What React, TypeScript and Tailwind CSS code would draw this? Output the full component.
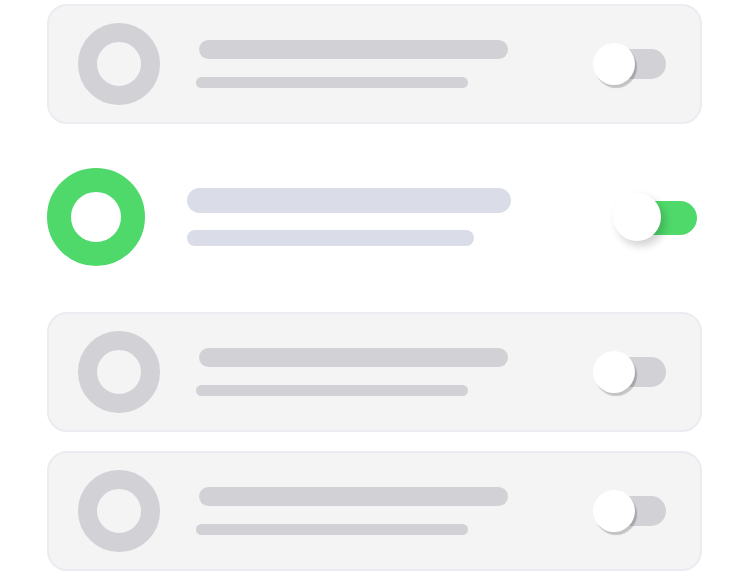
import React from "react";

function InactiveCard() {
  return (
    <div className="ml-[47px] flex h-[120px] w-[655px] items-center rounded-[20px] border-2 border-[#ebebf1] bg-[#f4f4f5] pl-[29px] pr-[34px]">
      <div className="h-[82px] w-[82px] shrink-0 rounded-full border-[19px] border-[#d1d1d6]" />
      <div className="ml-[36px] -mt-[1px] flex flex-col gap-[18px]">
        <div className="ml-[3px] h-[19px] w-[309px] rounded-full bg-[#d1d1d6]" />
        <div className="h-[11px] w-[272px] rounded-full bg-[#d1d1d6]" />
      </div>
      <div className="relative ml-auto h-[42px] w-[73px]">
        <div className="absolute right-0 top-[6px] h-[30px] w-[60px] rounded-full bg-[#d1d1d6]" />
        <div className="absolute left-0 top-0 h-[42px] w-[42px] rounded-full bg-white shadow-[2px_3px_1px_rgba(0,0,0,0.2)]" />
      </div>
    </div>
  );
}

function ActiveRow() {
  return (
    <div className="mb-[2px] ml-[47px] flex h-[148px] w-[650px] items-center">
      <div className="h-[98px] w-[98px] shrink-0 rounded-full border-[24px] border-[#4fd96b] bg-white" />
      <div className="ml-[42px] flex flex-col gap-[17px]">
        <div className="h-[25px] w-[324px] rounded-full bg-[#dadce8]" />
        <div className="h-[16px] w-[287px] rounded-full bg-[#dadce8]" />
      </div>
      <div className="relative ml-auto h-[48px] w-[84px]">
        <div className="absolute right-0 top-[8px] h-[34px] w-[72px] rounded-full bg-[#4fd96b]" />
        <div className="absolute left-0 top-0 h-[48px] w-[48px] rounded-full bg-white shadow-[4px_5px_8px_rgba(0,0,0,0.18)]" />
      </div>
    </div>
  );
}

export default function App() {
  return (
    <div className="h-[576px] w-[750px] overflow-hidden bg-white pt-[4px]">
      <div className="flex flex-col gap-[19px]">
        <InactiveCard />
        <ActiveRow />
        <InactiveCard />
        <InactiveCard />
      </div>
    </div>
  );
}
